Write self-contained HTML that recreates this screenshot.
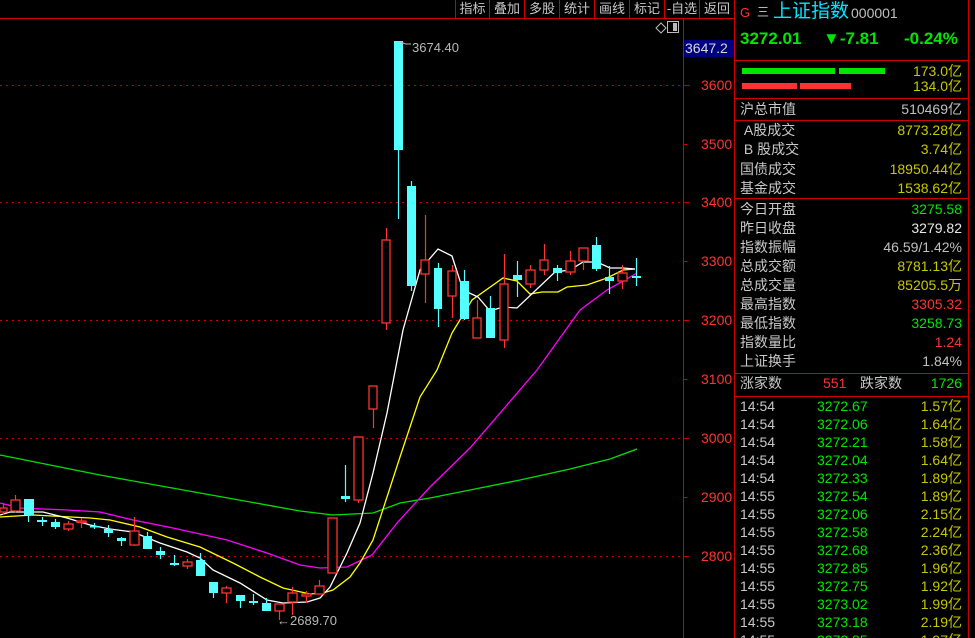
<!DOCTYPE html>
<html><head><meta charset="utf-8">
<style>
*{margin:0;padding:0;box-sizing:border-box}
html,body{width:975px;height:638px;overflow:hidden}
body{background:#000;position:relative;font-family:"Liberation Sans","Noto Sans CJK SC",sans-serif;font-size:14px;color:#c0c0c0}
.a{position:absolute;white-space:nowrap;line-height:1}
.tb{position:absolute;top:0;height:18px;border-left:1px solid #c00;font-size:13px;color:#c8c8c8;line-height:17px;text-align:center}
.hl{position:absolute;left:735px;width:233px;height:1px;background:#c00}
.r{position:absolute;left:740px;width:222px;height:19px;line-height:19px;font-size:14px}
.r span{position:absolute}
.l{left:0;color:#c8c8c8}
.v{right:0}
.g{color:#00e600}.rd{color:#ff3232}.y{color:#c8c800}.w{color:#e8e8e8}.gy{color:#c0c0c0}
</style></head><body>
<svg width="735" height="638" style="position:absolute;left:0;top:0">
<line x1="0" y1="18.5" x2="735" y2="18.5" stroke="#c00"/>
<line x1="683.5" y1="18" x2="683.5" y2="638" stroke="#c00"/>
<line x1="734.5" y1="0" x2="734.5" y2="638" stroke="#c00"/>
<g stroke="#c00" stroke-dasharray="2,4" stroke-width="1">
<line x1="0" y1="85.5" x2="683" y2="85.5"/><line x1="0" y1="202.5" x2="683" y2="202.5"/><line x1="0" y1="320.5" x2="683" y2="320.5"/><line x1="0" y1="438.5" x2="683" y2="438.5"/><line x1="0" y1="556.5" x2="683" y2="556.5"/>
</g>
<g stroke="#c00"><line x1="683" y1="85.5" x2="689" y2="85.5"/><line x1="683" y1="144.5" x2="687" y2="144.5"/><line x1="683" y1="202.5" x2="689" y2="202.5"/><line x1="683" y1="261.5" x2="687" y2="261.5"/><line x1="683" y1="320.5" x2="689" y2="320.5"/><line x1="683" y1="379.5" x2="687" y2="379.5"/><line x1="683" y1="438.5" x2="689" y2="438.5"/><line x1="683" y1="497.5" x2="687" y2="497.5"/><line x1="683" y1="556.5" x2="689" y2="556.5"/></g>
<g fill="#ff3232" font-size="14" font-family="Liberation Sans">
<text x="701" y="90">3600</text><text x="701" y="149">3500</text><text x="701" y="207">3400</text><text x="701" y="266">3300</text><text x="701" y="325">3200</text><text x="701" y="384">3100</text><text x="701" y="443">3000</text><text x="701" y="502">2900</text><text x="701" y="561">2800</text>
</g>
<rect x="684" y="40" width="49" height="17" fill="#000080"/>
<text x="685" y="53" fill="#d8d8d8" font-size="14" font-family="Liberation Sans">3647.2</text>
<path d="M656 28 l5 -5 l5 5 l-5 5z" fill="none" stroke="#bbb"/>
<rect x="667.5" y="21.5" width="11" height="11" fill="none" stroke="#bbb"/><rect x="673" y="23" width="4" height="8" fill="#bbb"/>
<polyline fill="none" stroke="#00e000" stroke-width="1.3" points="0,455 100,475 200,493 300,511 333,515 373,513 400,503 430,498 470,490 520,480 570,469 610,459 637,449"/>
<polyline fill="none" stroke="#ff00ff" stroke-width="1.3" points="0,503 20,508 67,510 100,512 133,520 173,528 227,540 267,553 300,565 320,568 347,567 372,555 397,523 430,487 470,448 537,370 580,310 607,290 637,273"/>
<polyline fill="none" stroke="#ffff00" stroke-width="1.3" points="0,517 33,515 90,518 110,520 140,527 167,537 200,547 233,563 260,577 283,588 310,594 323,593 333,590 350,577 360,563 373,540 387,497 400,457 420,397 437,370 452,333 472,300 503,278 517,281 530,294 542,292 558,292 567,287 587,285 607,278 623,270 635,269"/>
<polyline fill="none" stroke="#ffffff" stroke-width="1.3" points="0,515 10,512 43,512 67,518 90,525 110,529 133,532 160,543 187,552 200,558 213,570 240,583 267,600 283,603 307,602 320,598 330,587 347,553 360,523 373,473 387,413 403,330 420,270 438,249 452,256 463,290 478,297 490,311 503,307 517,308 555,272 570,270 583,262 597,262 610,268 623,268 635,269"/>
<g stroke-width="1.2">
<g stroke="#ff3232">
<line x1="3.5" y1="504" x2="3.5" y2="515"/><line x1="15.5" y1="495" x2="15.5" y2="513"/><line x1="68.5" y1="521" x2="68.5" y2="531"/><line x1="81.5" y1="518" x2="81.5" y2="528"/><line x1="134.5" y1="517" x2="134.5" y2="546"/><line x1="187.5" y1="559" x2="187.5" y2="569"/><line x1="226.5" y1="586" x2="226.5" y2="603"/><line x1="279.5" y1="611" x2="279.5" y2="620"/><line x1="292.5" y1="587" x2="292.5" y2="615"/><line x1="306.5" y1="591" x2="306.5" y2="603"/><line x1="319.5" y1="580" x2="319.5" y2="594"/><line x1="358.5" y1="500" x2="358.5" y2="503"/><line x1="373.5" y1="409" x2="373.5" y2="428"/><line x1="386.5" y1="228" x2="386.5" y2="330"/><line x1="425.5" y1="215" x2="425.5" y2="303"/><line x1="452.5" y1="265" x2="452.5" y2="318"/><line x1="477.5" y1="300" x2="477.5" y2="338"/><line x1="504.5" y1="254" x2="504.5" y2="348"/><line x1="530.5" y1="265" x2="530.5" y2="288"/><line x1="544.5" y1="244" x2="544.5" y2="275"/><line x1="570.5" y1="251" x2="570.5" y2="275"/><line x1="583.5" y1="248" x2="583.5" y2="270"/><line x1="622.5" y1="265" x2="622.5" y2="289"/>
</g>
<g stroke="#54ffff">
<line x1="28.5" y1="499" x2="28.5" y2="522"/><line x1="42.5" y1="517" x2="42.5" y2="526"/><line x1="55.5" y1="519" x2="55.5" y2="529"/><line x1="94.5" y1="523" x2="94.5" y2="529"/><line x1="108.5" y1="525" x2="108.5" y2="537"/><line x1="121.5" y1="537" x2="121.5" y2="546"/><line x1="147.5" y1="532" x2="147.5" y2="549"/><line x1="160.5" y1="547" x2="160.5" y2="559"/><line x1="174.5" y1="555" x2="174.5" y2="566"/><line x1="200.5" y1="553" x2="200.5" y2="576"/><line x1="213.5" y1="582" x2="213.5" y2="598"/><line x1="240.5" y1="595" x2="240.5" y2="608"/><line x1="253.5" y1="594" x2="253.5" y2="605"/><line x1="266.5" y1="598" x2="266.5" y2="611"/><line x1="345.5" y1="465" x2="345.5" y2="502"/><line x1="398.5" y1="41" x2="398.5" y2="219"/><line x1="411.5" y1="181" x2="411.5" y2="291"/><line x1="438.5" y1="263" x2="438.5" y2="327"/><line x1="464.5" y1="270" x2="464.5" y2="320"/><line x1="490.5" y1="296" x2="490.5" y2="338"/><line x1="517.5" y1="261" x2="517.5" y2="297"/><line x1="557.5" y1="265" x2="557.5" y2="281"/><line x1="596.5" y1="237" x2="596.5" y2="271"/><line x1="609.5" y1="266" x2="609.5" y2="294"/><line x1="636.5" y1="258" x2="636.5" y2="286"/>
</g></g>
<g fill="#000" stroke="#ff3232" stroke-width="1.3">
<rect x="0" y="508" width="7" height="4"/><rect x="11" y="500" width="9" height="11"/><rect x="64" y="524" width="9" height="5"/><rect x="77" y="521" width="9" height="1.5"/><rect x="130" y="531" width="9" height="14"/><rect x="183" y="562" width="9" height="4"/><rect x="222" y="588" width="9" height="5"/><rect x="275" y="604" width="9" height="7"/><rect x="288" y="593" width="9" height="9"/><rect x="302" y="594" width="9" height="2"/><rect x="315" y="586" width="9" height="8"/><rect x="328" y="518" width="9" height="55"/><rect x="354" y="437" width="9" height="63"/><rect x="369" y="386" width="8" height="23"/><rect x="382" y="240" width="8" height="83"/><rect x="421" y="260" width="8" height="14"/><rect x="448" y="271" width="8" height="25"/><rect x="473" y="318" width="8" height="20"/><rect x="500" y="284" width="8" height="56"/><rect x="526" y="270" width="9" height="14"/><rect x="540" y="260" width="8" height="10"/><rect x="566" y="261" width="9" height="11"/><rect x="579" y="248" width="9" height="13"/><rect x="618" y="273" width="9" height="8"/>
</g>
<g fill="#54ffff">
<rect x="24" y="499" width="10" height="16"/><rect x="37" y="520" width="10" height="2"/><rect x="51" y="522" width="9" height="5"/><rect x="90" y="526" width="9" height="1.5"/><rect x="104" y="529" width="9" height="4"/><rect x="117" y="538" width="9" height="3"/><rect x="143" y="536" width="9" height="13"/><rect x="156" y="551" width="9" height="4"/><rect x="170" y="563" width="9" height="2"/><rect x="196" y="560" width="9" height="16"/><rect x="209" y="582" width="9" height="11"/><rect x="236" y="595" width="9" height="6"/><rect x="249" y="601" width="9" height="2"/><rect x="262" y="603" width="9" height="8"/><rect x="341" y="496" width="9" height="3"/><rect x="394" y="41" width="9" height="109"/><rect x="407" y="186" width="9" height="100"/><rect x="434" y="268" width="8" height="41"/><rect x="460" y="281" width="9" height="38"/><rect x="486" y="308" width="9" height="30"/><rect x="513" y="275" width="9" height="5"/><rect x="553" y="268" width="9" height="5"/><rect x="592" y="245" width="9" height="24"/><rect x="605" y="277" width="9" height="4"/><rect x="632" y="276" width="9" height="2"/>
</g>
<g fill="#b8b8b8" font-size="13" font-family="Liberation Sans">
<path d="M400 42 l6 2 l5 0" fill="none" stroke="#b8b8b8"/>
<text x="412" y="52">3674.40</text>
<text x="277" y="625">←2689.70</text>
</g>
</svg>
<div class="tb" style="left:455px;width:34px">指标</div>
<div class="tb" style="left:489px;width:35px">叠加</div>
<div class="tb" style="left:524px;width:35px">多股</div>
<div class="tb" style="left:559px;width:35px">统计</div>
<div class="tb" style="left:594px;width:35px">画线</div>
<div class="tb" style="left:629px;width:35px">标记</div>
<div class="tb" style="left:664px;width:35px">-自选</div>
<div class="tb" style="left:699px;width:35px">返回</div>
<div style="position:absolute;left:968px;top:0;width:1px;height:638px;background:#c00"></div>
<div class="a rd" style="left:740px;top:6px;font-size:13px">G</div>
<div class="a" style="left:757px;top:6px;font-size:12px;color:#ccc">三</div>
<div class="a" style="left:773px;top:2px;font-size:19px;color:#00e8ff">上证指数</div>
<div class="a" style="left:851px;top:6px;font-size:14px;color:#c0c0c0">000001</div>
<div class="a g" style="left:740px;top:30px;font-size:17px;font-weight:bold">3272.01</div>
<div class="a g" style="left:823px;top:30px;font-size:17px;font-weight:bold">▼-7.81</div>
<div class="a g" style="left:904px;top:30px;font-size:17px;font-weight:bold">-0.24%</div>
<div class="hl" style="top:60px"></div>
<div style="position:absolute;left:742px;top:68px;width:93px;height:6px;background:#00e600"></div>
<div style="position:absolute;left:839px;top:68px;width:46px;height:6px;background:#00e600"></div>
<div style="position:absolute;left:742px;top:83px;width:55px;height:6px;background:#ff3232"></div>
<div style="position:absolute;left:800px;top:83px;width:51px;height:6px;background:#ff3232"></div>
<div class="a y" style="right:13px;top:64px;font-size:14px">173.0亿</div>
<div class="a y" style="right:13px;top:79px;font-size:14px">134.0亿</div>
<div class="hl" style="top:98px"></div>
<div class="r" style="top:100px"><span class="l">沪总市值</span><span class="v gy">510469亿</span></div>
<div class="hl" style="top:120px"></div>
<div class="r" style="top:121px"><span class="l">&nbsp;A股成交</span><span class="v y">8773.28亿</span></div>
<div class="r" style="top:140px"><span class="l">&nbsp;B 股成交</span><span class="v y">3.74亿</span></div>
<div class="r" style="top:160px"><span class="l">国债成交</span><span class="v y">18950.44亿</span></div>
<div class="r" style="top:179px"><span class="l">基金成交</span><span class="v y">1538.62亿</span></div>
<div class="hl" style="top:198px"></div>
<div class="r" style="top:200px"><span class="l">今日开盘</span><span class="v g">3275.58</span></div>
<div class="r" style="top:219px"><span class="l">昨日收盘</span><span class="v w">3279.82</span></div>
<div class="r" style="top:238px"><span class="l">指数振幅</span><span class="v gy">46.59/1.42%</span></div>
<div class="r" style="top:257px"><span class="l">总成交额</span><span class="v y">8781.13亿</span></div>
<div class="r" style="top:276px"><span class="l">总成交量</span><span class="v y">85205.5万</span></div>
<div class="r" style="top:295px"><span class="l">最高指数</span><span class="v rd">3305.32</span></div>
<div class="r" style="top:314px"><span class="l">最低指数</span><span class="v g">3258.73</span></div>
<div class="r" style="top:333px"><span class="l">指数量比</span><span class="v rd">1.24</span></div>
<div class="r" style="top:352px"><span class="l">上证换手</span><span class="v gy">1.84%</span></div>
<div class="hl" style="top:373px"></div>
<div class="r" style="top:374px"><span class="l">涨家数</span><span class="rd" style="left:83px">551</span><span style="left:120px;color:#c8c8c8">跌家数</span><span class="v g">1726</span></div>
<div class="hl" style="top:396px"></div>
<div class="r" style="top:397px;height:18px;line-height:18px"><span class="l">14:54</span><span class="g" style="left:77px">3272.67</span><span class="v y">1.57亿</span></div>
<div class="r" style="top:415px;height:18px;line-height:18px"><span class="l">14:54</span><span class="g" style="left:77px">3272.06</span><span class="v y">1.64亿</span></div>
<div class="r" style="top:433px;height:18px;line-height:18px"><span class="l">14:54</span><span class="g" style="left:77px">3272.21</span><span class="v y">1.58亿</span></div>
<div class="r" style="top:451px;height:18px;line-height:18px"><span class="l">14:54</span><span class="g" style="left:77px">3272.04</span><span class="v y">1.64亿</span></div>
<div class="r" style="top:469px;height:18px;line-height:18px"><span class="l">14:54</span><span class="g" style="left:77px">3272.33</span><span class="v y">1.89亿</span></div>
<div class="r" style="top:487px;height:18px;line-height:18px"><span class="l">14:55</span><span class="g" style="left:77px">3272.54</span><span class="v y">1.89亿</span></div>
<div class="r" style="top:505px;height:18px;line-height:18px"><span class="l">14:55</span><span class="g" style="left:77px">3272.06</span><span class="v y">2.15亿</span></div>
<div class="r" style="top:523px;height:18px;line-height:18px"><span class="l">14:55</span><span class="g" style="left:77px">3272.58</span><span class="v y">2.24亿</span></div>
<div class="r" style="top:541px;height:18px;line-height:18px"><span class="l">14:55</span><span class="g" style="left:77px">3272.68</span><span class="v y">2.36亿</span></div>
<div class="r" style="top:559px;height:18px;line-height:18px"><span class="l">14:55</span><span class="g" style="left:77px">3272.85</span><span class="v y">1.96亿</span></div>
<div class="r" style="top:577px;height:18px;line-height:18px"><span class="l">14:55</span><span class="g" style="left:77px">3272.75</span><span class="v y">1.92亿</span></div>
<div class="r" style="top:595px;height:18px;line-height:18px"><span class="l">14:55</span><span class="g" style="left:77px">3273.02</span><span class="v y">1.99亿</span></div>
<div class="r" style="top:613px;height:18px;line-height:18px"><span class="l">14:55</span><span class="g" style="left:77px">3273.18</span><span class="v y">2.19亿</span></div>
<div class="r" style="top:631px;height:18px;line-height:18px"><span class="l">14:55</span><span class="g" style="left:77px">3272.85</span><span class="v y">1.97亿</span></div>
</body></html>
